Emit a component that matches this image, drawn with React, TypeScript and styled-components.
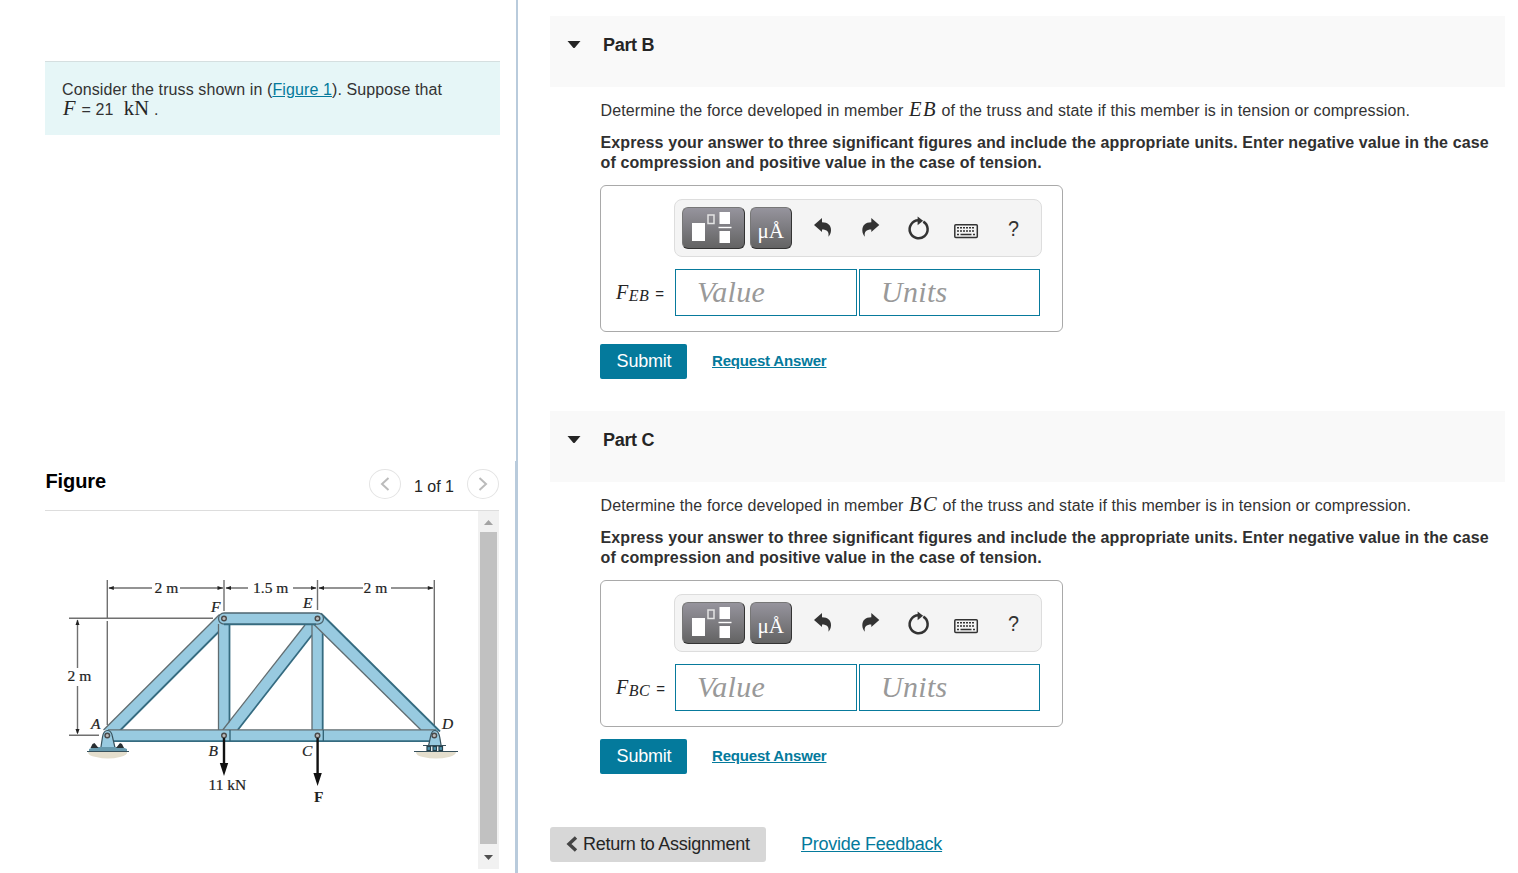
import styled, { createGlobalStyle } from "styled-components";

const GlobalStyle = createGlobalStyle`
  * {
    box-sizing: border-box;
  }
  body {
    margin: 0;
    background: #fff;
    color: #252525;
    font-family: "Liberation Sans", Arial, sans-serif;
    font-size: 16px;
    line-height: 20px;
    overflow: hidden;
  }
`;

const Page = styled.div`
  display: flex;
  width: 1518px;
  height: 873px;
`;

const LeftPane = styled.aside`
  display: flex;
  flex-direction: column;
  width: 518px;
`;

const IntroPane = styled.section`
  height: 461px;
  padding: 61px 16px 0 45px;
  border-right: 2px solid #b9cbdc;
`;

const Intro = styled.div`
  width: 455px;
  height: 74px;
  padding: 18px 17px;
  border-top: 1px solid #d5dfe0;
  background: #e6f6f7;
  color: #333;
  letter-spacing: 0.11px;
  white-space: nowrap;
`;

const FigurePane = styled.section`
  flex: 1;
  padding-left: 45px;
  border-right: 3px solid #b9cbdc;
`;

const FigureHead = styled.header`
  display: flex;
  align-items: center;
  width: 454px;
  height: 50px;
  border-bottom: 1px solid #ddd;
`;

const FigureTitle = styled.h2`
  flex: 1;
  margin: 0;
  padding: 0 0 9px 0.5px;
  color: #000;
  font-size: 20px;
  letter-spacing: -0.1px;
`;

const Pager = styled.nav`
  display: flex;
  align-items: center;
  gap: 13px;
  padding-bottom: 3px;
  span {
    padding-top: 5px;
  }
`;

const RoundButton = styled.button`
  display: flex;
  align-items: center;
  justify-content: center;
  width: 32px;
  height: 30px;
  padding: 0;
  border: 1px solid #e4e4e4;
  border-radius: 50%;
  background: #fff;
`;

const FigureBody = styled.div`
  display: flex;
  width: 454px;
  height: 358px;
`;

const Scrollbar = styled.div`
  display: flex;
  flex-direction: column;
  align-items: center;
  width: 21px;
  background: #f1f1f1;
`;

const Thumb = styled.div`
  width: 17px;
  height: 312px;
  background: #c1c1c1;
`;

const ScrollArrow = styled.svg<{ $height: number }>`
  display: block;
  flex: none;
  width: 21px;
  height: ${({ $height }) => $height}px;
`;

const RightPane = styled.main`
  flex: 1;
  padding: 16px 13px 0 32px;
`;

const PartSection = styled.section`
  height: 395px;
`;

const PartHead = styled.header`
  display: flex;
  gap: 22px;
  height: 71px;
  padding: 19px 17px;
  background: #f9f9f9;
  font-size: 18px;
  font-weight: bold;
  letter-spacing: -0.3px;
`;

const Caret = styled.svg`
  width: 14px;
  height: 20px;
`;

const PartBody = styled.div`
  padding: 14px 0 0 50px;
`;

const Question = styled.p`
  margin: 0 0 12px;
  padding-left: 0.5px;
  color: #333;
  letter-spacing: 0.105px;
  white-space: nowrap;
`;

const Instruction = styled.p`
  margin: 0 0 12px;
  padding-left: 0.5px;
  color: #303030;
  font-weight: bold;
  letter-spacing: 0.115px;
  white-space: nowrap;
`;

const MathText = styled.span<{ $italic?: boolean }>`
  margin-left: 1px;
  color: #252525;
  font-family: "Liberation Serif", "Times New Roman", serif;
  font-size: 20.5px;
  font-style: ${({ $italic }) => ($italic ? "italic" : "normal")};
  letter-spacing: ${({ $italic }) => ($italic ? "1.4px" : "0.4px")};
  line-height: 0;
`;

const AnswerBox = styled.div`
  width: 463px;
  height: 147px;
  padding: 13px 20px 0 14px;
  border: 1px solid #a9a9a9;
  border-radius: 6px;
`;

const Toolbar = styled.div`
  display: flex;
  align-items: center;
  width: 368px;
  height: 58px;
  margin-left: 59px;
  padding-left: 7px;
  border: 1px solid #ddd;
  border-radius: 8px;
  background: #f4f4f4;
`;

const DarkButton = styled.button<{ $width: number }>`
  width: ${({ $width }) => $width}px;
  height: 42px;
  margin-right: 5px;
  padding: 0;
  border: 1px solid;
  border-color: #777 #333 #333 #777;
  border-radius: 6px;
  background: linear-gradient(#96949d, #636363);
  svg {
    display: block;
  }
`;

const Tools = styled.div`
  display: flex;
  margin-left: 2px;
  svg {
    width: 48px;
    height: 42px;
  }
`;

const FieldRow = styled.div`
  display: flex;
  align-items: center;
  margin-top: 12px;
`;

const FieldLabel = styled.label`
  width: 60px;
  padding-left: 1px;
  white-space: nowrap;
  i {
    font-family: "Liberation Serif", "Times New Roman", serif;
    font-size: 20px;
  }
  sub {
    margin-left: 0.5px;
    font-size: 16px;
    letter-spacing: 0.5px;
    line-height: 0;
    vertical-align: -2px;
  }
  span {
    margin-left: 6px;
    font-size: 15px;
  }
`;

const Field = styled.input<{ $width: number }>`
  width: ${({ $width }) => $width}px;
  height: 47px;
  margin-right: 2px;
  padding: 0 0 2px 21px;
  border: 1px solid #087a9c;
  background: #fff;
  font-family: "Liberation Serif", "Times New Roman", serif;
  font-size: 30px;
  font-style: italic;
  letter-spacing: 0.3px;
  &::placeholder {
    color: #999;
    opacity: 1;
  }
`;

const Actions = styled.div`
  display: flex;
  align-items: center;
  gap: 25px;
  margin-top: 12px;
`;

const SubmitButton = styled.button`
  width: 87px;
  height: 35px;
  padding: 0 0 1px 1px;
  border: 0;
  border-radius: 2px;
  background: #047a9c;
  color: #fff;
  font-family: inherit;
  font-size: 18px;
  letter-spacing: -0.2px;
`;

const Link = styled.a<{ $bold?: boolean; $size?: number; $spacing?: number }>`
  padding-bottom: ${({ $spacing }) => ($spacing ? 2 : 0)}px;
  color: #047a9c;
  font-size: ${({ $size }) => $size ?? 16}px;
  font-weight: ${({ $bold }) => ($bold ? "bold" : "normal")};
  letter-spacing: ${({ $spacing }) => ($spacing ? `${$spacing}px` : "inherit")};
  text-decoration: underline;
`;

const Footer = styled.footer`
  display: flex;
  align-items: center;
  gap: 35px;
  margin-top: 21px;
`;

const ReturnButton = styled.button`
  display: flex;
  align-items: center;
  gap: 5px;
  width: 216px;
  height: 35px;
  padding: 0 0 1px 16px;
  border: 0;
  border-radius: 3px;
  background: #d7d7d7;
  color: #252525;
  font-family: inherit;
  font-size: 18px;
  letter-spacing: -0.27px;
  white-space: nowrap;
`;

const TrussSvg = styled.svg`
  width: 433px;
  height: 358px;
  font-family: "Liberation Serif", "Times New Roman", serif;
  font-size: 15.5px;
  fill: #222;
`;

// each bar: fill outline, then the light edge and the shaded edge
const bars = [
  { fill: "103.5,730 220,614 225,625 120,731", light: "M103.5 730 219.5 614.5", dark: "M120 730.5 225 625.5" },
  { fill: "218.5,622 230,622 230,731 218.5,731", light: "M218.5 624v106", dark: "M229.5 624v106" },
  { fill: "222.7,731 305,625 312,625 312,635 237.7,731", light: "M222.7 730 305 625", dark: "M237.7 730 312 635" },
  { fill: "312,622 323,622 323,731 312,731", light: "M312 624v106", dark: "M322.7 632v98" },
  { fill: "321,613.5 440,731 422,731 314,625", light: "M421 730 314 624.5", dark: "M321 613.5 440 731.5" },
  { fill: "108,730 436,730 436,741 108,741", light: "M108 729.8h328", dark: "M108 741.2h328" },
];

const pins = [
  [107.3, 735.5],
  [224, 618.5],
  [317.5, 618.5],
  [224, 735.5],
  [317.5, 735.5],
  [434.3, 735.5],
];

function Truss() {
  return (
    <TrussSvg viewBox="45 511 433 358">
      <g stroke="#707070" strokeWidth="1.4" fill="none">
        <path d="M107.3 580v38M107.3 621v104M224 580v31M317.5 580v30M434.3 580v146" />
        <path d="M69 618.3h144M69 735.3h30" />
        <path d="M77.5 620v48M77.5 686v47M109 588h43M180 588h43M226 588h22M293 588h23M319 588h44M391 588h42" />
      </g>
      <g fill="#222">
        <path d="M108.3 588l5.5-2v4zM223 588l-5.5-2v4zM225.5 588l5.5-2v4zM316.5 588l-5.5-2v4zM318.5 588l5.5-2v4zM433.3 588l-5.5-2v4z" />
        <path d="M77.5 619.5l-2 5.5h4zM77.5 734.5l-2-5.5h4z" />
      </g>

      <g fill="#e4decd">
        <path d="M88 752h39q1 3-7 5-12 3-24 0-8-1-8-5z" />
        <path d="M416 752h40q0 3-7 5-13 3-26 0-7-1-7-5z" />
      </g>

      {bars.map((bar) => (
        <g key={bar.fill} fill="none">
          <polygon points={bar.fill} fill="#98cae0" />
          <path d={bar.light} stroke="#606c70" strokeWidth="1.3" />
          <path d={bar.dark} stroke="#356b80" strokeWidth="1.8" />
        </g>
      ))}
      <path d="M230 730v11M323.3 730v11" stroke="#2f5f72" strokeWidth="1.3" />
      {/* top chord has rounded ends */}
      <rect x="218.5" y="613" width="105" height="11.2" rx="5.6" fill="#98cae0" stroke="#4e6670" strokeWidth="1.3" />
      <path d="M224 624.3h92" stroke="#356b80" strokeWidth="1.8" />

      <g stroke="#37515c" strokeWidth="1.2">
        <path d="M100.5 750l2-13q1-6.5 5-6.5t5 6.5l3 13z" fill="#98cae0" />
        <path d="M428.5 746l2-9q1-6.5 4.5-6.5t4.7 6.5l1.5 9z" fill="#98cae0" />
        <path d="M89 749l5-2h28l5 2v2H89z" fill="#6699ad" stroke="none" />
        <path d="M87 751.5h42M414 751.5h44M423 745.5h23" fill="none" />
      </g>
      <path d="M90.5 748l2-4 2-1 4 5zM116 748l4-5 2 1 2 4z" fill="#292f32" />
      <g fill="#4e94ae" stroke="#263f4a" strokeWidth="1.2">
        <rect x="427" y="746.5" width="3.5" height="4" />
        <rect x="433" y="746.5" width="3.5" height="4" />
        <rect x="439" y="746.5" width="3.5" height="4" />
      </g>
      {pins.map(([x, y]) => (
        <circle key={`${x}-${y}`} cx={x} cy={y} r="2.3" fill="#b9b9b9" stroke="#4a4a4a" strokeWidth="1.4" />
      ))}

      <g stroke="#111" strokeWidth="2.4" fill="#111">
        <path d="M224 738v26M317.6 738v36" />
        <path d="M224 776l-4.2-13h8.4zM317.6 786l-4.2-13h8.4z" stroke="none" />
      </g>

      <g stroke="#222" strokeWidth="0.2">
        <text x="154.5" y="593">2 m</text>
        <text x="253" y="593">1.5 m</text>
        <text x="363.5" y="593">2 m</text>
        <text x="67.5" y="681.3">2 m</text>
        <text x="208.5" y="789.5">11 kN</text>
        <g fontStyle="italic">
          <text x="211" y="612">F</text>
          <text x="303" y="607.5">E</text>
          <text x="91" y="728.5">A</text>
          <text x="442" y="728.5">D</text>
          <text x="208.5" y="755.7">B</text>
          <text x="302" y="755.7">C</text>
        </g>
      </g>
      <text x="314" y="801.5" fontWeight="bold">F</text>
    </TrussSvg>
  );
}

function TemplateIcon() {
  return (
    <svg width="61" height="40" viewBox="0 0 61 40">
      <g fill="#fff">
        <rect x="9" y="15" width="13" height="18" />
        <rect x="36.5" y="4" width="10.5" height="12" />
        <rect x="36.5" y="23" width="10.5" height="12" />
        <rect x="35.5" y="18.8" width="13" height="1.4" />
      </g>
      <rect x="25" y="7" width="6" height="8.5" fill="none" stroke="#e4e4e4" strokeWidth="1.5" />
    </svg>
  );
}

function UnitsIcon() {
  return (
    <svg width="40" height="40" viewBox="0 0 40 40">
      <text x="6.5" y="30" fill="#fff" fontFamily="Liberation Serif, serif" fontSize="22" textLength="26.5" lengthAdjust="spacingAndGlyphs">
        μÅ
      </text>
    </svg>
  );
}

function ToolIcons() {
  return (
    <Tools>
      <svg viewBox="0 0 48 42" fill="#333">
        <path d="M15 18l8-7v4.200c6 0 9 3 9 8 0 3-1.200 5-2.600 6.600 1-5-1.400-7.300-6.400-7.300V25z" />
      </svg>
      <svg viewBox="0 0 48 42" fill="#333">
        <path d="M32.300 18l-8-7v4.200c-6 0-9 3-9 8 0 3 1.200 5 2.600 6.600-1-5 1.400-7.300 6.400-7.300V25z" />
      </svg>
      <svg viewBox="0 0 48 42" fill="none">
        <path d="M28.300 14.600a9 9 0 1 1-5-1.300" stroke="#333" strokeWidth="2.5" />
        <path d="M22.600 9.500l5.500 4.300-5.500 4.500z" fill="#333" />
      </svg>
      <svg viewBox="0 0 48 42" fill="none">
        <rect x="11.8" y="17.7" width="22.5" height="12.7" rx="1" stroke="#333" strokeWidth="1.5" />
        <path d="M14 20.700h18M14 24h18" stroke="#333" strokeWidth="1.5" strokeDasharray="2 1" />
        <path d="M14 27.500h2M17.500 27.500h11M30 27.500h2" stroke="#333" strokeWidth="1.5" />
      </svg>
      <svg viewBox="0 0 48 42">
        <text x="17" y="28.5" fontSize="22" textLength="11" lengthAdjust="spacingAndGlyphs" fontFamily="Liberation Sans, sans-serif" fill="#333">
          ?
        </text>
      </svg>
    </Tools>
  );
}

function Part({ name, member }: { name: string; member: string }) {
  return (
    <PartSection>
      <PartHead>
        <Caret viewBox="0 0 14 20">
          <path d="M.5 6h13L8 12.500q-1 1-2 0z" fill="#252525" />
        </Caret>
        <span>Part {name}</span>
      </PartHead>
      <PartBody>
        <Question>
          Determine the force developed in member <MathText $italic>{member}</MathText> of the truss and
          state if this member is in tension or compression.
        </Question>
        <Instruction>
          Express your answer to three significant figures and include the appropriate units. Enter negative
          value in the case
          <br />
          of compression and positive value in the case of tension.
        </Instruction>
        <AnswerBox>
          <Toolbar>
            <DarkButton $width={63}>
              <TemplateIcon />
            </DarkButton>
            <DarkButton $width={42}>
              <UnitsIcon />
            </DarkButton>
            <ToolIcons />
          </Toolbar>
          <FieldRow>
            <FieldLabel>
              <i>
                F<sub>{member}</sub>
              </i>
              <span>=</span>
            </FieldLabel>
            <Field $width={182} placeholder="Value" />
            <Field $width={181} placeholder="Units" />
          </FieldRow>
        </AnswerBox>
        <Actions>
          <SubmitButton>Submit</SubmitButton>
          <Link $bold $size={15} $spacing={-0.18}>
            Request Answer
          </Link>
        </Actions>
      </PartBody>
    </PartSection>
  );
}

export default function App() {
  return (
    <Page>
      <GlobalStyle />
      <LeftPane>
        <IntroPane>
          <Intro>
            Consider the truss shown in (<Link>Figure 1</Link>). Suppose that
            <br />
            <MathText $italic>F</MathText> = 21&nbsp; <MathText>kN</MathText> .
          </Intro>
        </IntroPane>
        <FigurePane>
          <FigureHead>
            <FigureTitle>Figure</FigureTitle>
            <Pager>
              <RoundButton aria-label="Previous">
                <svg width="10" height="14" viewBox="0 0 10 14" fill="none" stroke="#bbb" strokeWidth="2">
                  <path d="M8.500 1L2 7l6.500 6" />
                </svg>
              </RoundButton>
              <span>1 of 1</span>
              <RoundButton aria-label="Next">
                <svg width="10" height="14" viewBox="0 0 10 14" fill="none" stroke="#bbb" strokeWidth="2">
                  <path d="M1.500 1L8 7l-6.500 6" />
                </svg>
              </RoundButton>
            </Pager>
          </FigureHead>
          <FigureBody>
            <Truss />
            <Scrollbar>
              <ScrollArrow $height={21} viewBox="0 0 21 21">
                <path d="M6 14l4.500-5 4.500 5z" fill="#a3a3a3" />
              </ScrollArrow>
              <Thumb />
              <ScrollArrow $height={25} viewBox="0 0 21 25">
                <path d="M6 11l4.500 5 4.500-5z" fill="#505050" />
              </ScrollArrow>
            </Scrollbar>
          </FigureBody>
        </FigurePane>
      </LeftPane>
      <RightPane>
        <Part name="B" member="EB" />
        <Part name="C" member="BC" />
        <Footer>
          <ReturnButton>
            <svg width="12" height="16" viewBox="0 0 12 16" fill="none" stroke="#444" strokeWidth="3.4">
              <path d="M10 1.500L3 8l7 6.500" />
            </svg>
            Return to Assignment
          </ReturnButton>
          <Link $size={18} $spacing={-0.25}>
            Provide Feedback
          </Link>
        </Footer>
      </RightPane>
    </Page>
  );
}
